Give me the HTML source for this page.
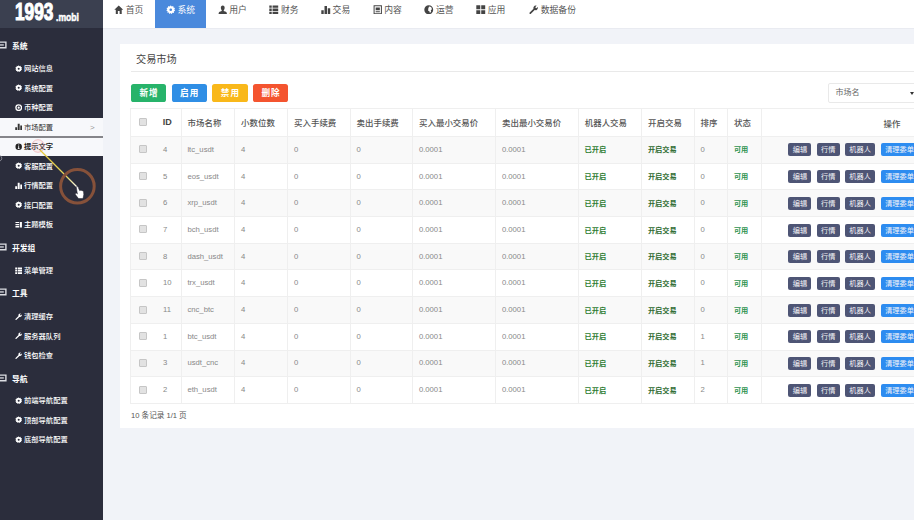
<!DOCTYPE html>
<html lang="zh-CN"><head><meta charset="utf-8"><title>交易市场</title>
<style>
*{box-sizing:border-box;margin:0;padding:0}
html,body{width:914px;height:520px;overflow:hidden}
body{background:#f1f3f8;font-family:"Liberation Sans","Noto Sans CJK SC",sans-serif;position:relative;color:#555}
.ic{width:8px;height:8px;fill:currentColor;vertical-align:middle;display:inline-block}
#side{position:absolute;left:0;top:0;width:103px;height:520px;background:#2b2d3c;overflow:hidden}
#logo{position:absolute;left:0;top:0;width:103px;height:28.3px;background:#3b4050;color:#fff}
#logo b{position:absolute;left:15px;top:0.3px;font-size:23.5px;line-height:24px;font-weight:bold;transform:scaleX(0.735);transform-origin:0 0;letter-spacing:0;-webkit-text-stroke:1.1px #fff}
#logo i{position:absolute;left:56px;top:10.5px;font-style:normal;font-size:10.5px;line-height:12px;font-weight:bold;transform:scaleX(0.82);transform-origin:0 0;-webkit-text-stroke:0.5px #fff}
.sh{position:absolute;left:0;width:103px;height:14px;line-height:15.4px;color:#fff;font-weight:bold;font-size:7.8px;padding-left:12px}
.si{position:absolute;left:0;width:103px;height:18px;line-height:19.4px;color:#fff;font-size:7.3px;padding-left:15px;white-space:nowrap;font-weight:500}
.si .ic{width:7.4px;height:7.4px;margin-right:1.6px;position:relative;top:-0.6px;left:-0.5px}
.si.on{background:#f7f8fb;color:#222}
#top{position:absolute;left:103px;top:0;width:830px;height:29px;background:#fff;border-bottom:1px solid #e9ebf1}
.tab{position:absolute;top:0;height:28px;line-height:21.8px;font-size:8.8px;color:#555;text-align:center;white-space:nowrap}
.tab .ic{width:9.5px;height:9.5px;margin-right:2px;position:relative;top:-1.1px;color:#444}
.tab.on{background:#4a89dc;color:#fff;top:-10px;height:38px;padding-top:10px}
.tab.on .ic{color:#fff}
#panel{position:absolute;left:119.5px;top:43.5px;width:820px;height:384px;background:#fff}
#title{position:absolute;left:136px;top:51.6px;font-size:10.2px;line-height:15px;color:#444}
#hr{position:absolute;left:131px;top:71.2px;width:790px;height:1px;background:#e9e9e9}
.btn{position:absolute;top:83.5px;height:18.2px;width:35.4px;border-radius:2.6px;color:#fff;font-size:8.6px;line-height:18px;text-align:center;letter-spacing:1px;padding-left:1px;font-weight:bold}
#sel{position:absolute;left:828.4px;top:83px;width:110px;height:20px;border:1px solid #e9e9e9;border-radius:2px;background:#fff;font-size:8px;line-height:17.500px;padding-left:6px;color:#666}
#sel:after{content:"";position:absolute;left:80.500px;top:7.500px;border:2px solid transparent;border-top:3px solid #333}
table{position:absolute;left:130.3px;top:108px;border-collapse:collapse;table-layout:fixed;width:892.3px;font-size:8px}
td,th{border:1px solid #efefef;padding:0 0 0 5.6px;text-align:left;white-space:nowrap;overflow:hidden;font-weight:normal}
th{height:28px;color:#555;font-size:8.45px;padding-bottom:1.5px;padding-left:5.8px;font-weight:500}
td{height:26.7px;color:#888;font-size:7.7px;padding-bottom:0.8px}
tr.odd td{background:#f9f9f9}
td.g1{color:#2e7d32;font-weight:bold;font-size:7.2px}
td.g2{color:#2e6b30;font-weight:bold;font-size:7.2px}
td.g3{color:#2d9350;font-weight:bold;font-size:7.2px}
.cb{display:inline-block;width:8px;height:8px;border:1px solid #c6c6c6;background:#e2e2e2;border-radius:1px;vertical-align:middle;margin-left:2.4px;position:relative;top:-0.5px}
td.id,th.id{border-left:none;padding-left:0}
td.c0,th.c0{border-right:none}
.ab{position:relative;top:0.5px;display:inline-block;height:13px;line-height:13px;background:#4e5575;color:#f4f4f8;font-size:7.2px;border-radius:2px;text-align:center;margin-right:5.5px;vertical-align:middle;font-weight:normal}
.ab.b{background:#2d8cf0}
td.op{padding-left:26.8px}
#foot{position:absolute;left:131px;top:408.5px;font-size:7.6px;line-height:13px;color:#555}
#ov{position:absolute;left:0;top:0;width:914px;height:520px;pointer-events:none}
#w{position:absolute;left:0;top:0;width:914px;height:520px}
.ext{position:absolute}
</style></head><body><div id="w">
<div class="ext" style="left:-10px;top:-10px;width:113px;height:540px;background:#2b2d3c"></div>
<div class="ext" style="left:-10px;top:-10px;width:113px;height:38px;background:#3b4050"></div>
<div class="ext" style="left:103px;top:-10px;width:830px;height:38px;background:#fff"></div>

<div id="side"><div id="logo"><b>1993</b><i>.mobi</i></div>
<div class="sh" style="top:39px"><svg style="position:absolute;left:0;top:2px;width:8px;height:8px" viewBox="0 0 8 8"><path d="M-2 1.100 H5.900 V6.800 H-2" fill="none" stroke="#dcdde2" stroke-width="1.400"/><path d="M0 3.950 H3.800" fill="none" stroke="#dcdde2" stroke-width="1.300"/></svg>系统</div>
<div class="si" style="top:59px"><svg class="ic" viewBox="0 0 16 16"><path fill-rule="evenodd" d="M8 0.5 L9.6 2.6 L12.2 1.8 L12.6 4.4 L15.2 5 L14 7.4 L15.5 9.6 L13.2 10.8 L13.4 13.4 L10.8 13.2 L9.6 15.5 L8 13.6 L5.6 15.2 L4.8 12.8 L2.2 13 L2.8 10.4 L0.5 9.2 L2.2 7.2 L0.8 5 L3.4 4.4 L3.8 1.8 L6.4 2.6 Z M8 5.8 A2.2 2.2 0 1 0 8 10.2 A2.2 2.2 0 1 0 8 5.8 Z"/></svg>网站信息</div>
<div class="si" style="top:78.5px"><svg class="ic" viewBox="0 0 16 16"><path fill-rule="evenodd" d="M8 0.5 L9.6 2.6 L12.2 1.8 L12.6 4.4 L15.2 5 L14 7.4 L15.5 9.6 L13.2 10.8 L13.4 13.4 L10.8 13.2 L9.6 15.5 L8 13.6 L5.6 15.2 L4.8 12.8 L2.2 13 L2.8 10.4 L0.5 9.2 L2.2 7.2 L0.8 5 L3.4 4.4 L3.8 1.8 L6.4 2.6 Z M8 5.8 A2.2 2.2 0 1 0 8 10.2 A2.2 2.2 0 1 0 8 5.8 Z"/></svg>系统配置</div>
<div class="si" style="top:98px"><svg class="ic" viewBox="0 0 16 16"><path fill-rule="evenodd" d="M8 0.5 A7.5 7.5 0 1 0 8 15.5 A7.5 7.5 0 1 0 8 0.5 Z M8 3.4 A4.6 4.6 0 1 1 8 12.600 A4.600 4.600 0 1 1 8 3.400 Z M8 5.600 A2.400 2.400 0 1 0 8 10.400 A2.400 2.400 0 1 0 8 5.600 Z"/></svg>币种配置</div>
<div class="si on" style="top:117.7px;height:18px;line-height:19.6px;font-weight:normal;color:#333"><svg class="ic" viewBox="0 0 16 16"><path d="M0.5 9 H4.6 V15 H0.5 Z M5.9 1.5 H10.1 V15 H5.9 Z M11.4 5.5 H15.5 V15 H11.4 Z"/></svg>市场配置<span style="position:absolute;left:90px;top:0;color:#999;font-weight:normal;font-size:8px">&gt;</span></div>
<div class="si on" style="top:137.3px;height:18.3px;line-height:19.2px;font-weight:bold"><svg class="ic" viewBox="0 0 16 16"><path fill-rule="evenodd" d="M8 1 A7 7 0 1 0 8 15 A7 7 0 1 0 8 1 Z M7 3.500 H9 V5.500 H7 Z M6.500 7 H9 V11.500 H10 V12.800 H6 V11.500 H7 V8.300 H6.500 Z"/></svg>提示文字</div>
<div class="si" style="top:156.6px"><svg class="ic" viewBox="0 0 16 16"><path fill-rule="evenodd" d="M8 0.5 L9.6 2.6 L12.2 1.8 L12.6 4.4 L15.2 5 L14 7.4 L15.5 9.6 L13.2 10.8 L13.4 13.4 L10.8 13.2 L9.6 15.5 L8 13.6 L5.6 15.2 L4.8 12.8 L2.2 13 L2.8 10.4 L0.5 9.2 L2.2 7.2 L0.8 5 L3.4 4.4 L3.8 1.8 L6.4 2.6 Z M8 5.8 A2.2 2.2 0 1 0 8 10.2 A2.2 2.2 0 1 0 8 5.8 Z"/></svg>客服配置</div>
<div class="si" style="top:176px"><svg class="ic" viewBox="0 0 16 16"><path d="M0.5 9 H4.6 V15 H0.5 Z M5.9 1.5 H10.1 V15 H5.9 Z M11.4 5.5 H15.5 V15 H11.4 Z"/></svg>行情配置</div>
<div class="si" style="top:195.6px"><svg class="ic" viewBox="0 0 16 16"><path fill-rule="evenodd" d="M8 0.5 L9.6 2.6 L12.2 1.8 L12.6 4.4 L15.2 5 L14 7.4 L15.5 9.6 L13.2 10.8 L13.4 13.4 L10.8 13.2 L9.6 15.5 L8 13.6 L5.6 15.2 L4.8 12.8 L2.2 13 L2.8 10.4 L0.5 9.2 L2.2 7.2 L0.8 5 L3.4 4.4 L3.8 1.8 L6.4 2.6 Z M8 5.8 A2.2 2.2 0 1 0 8 10.2 A2.2 2.2 0 1 0 8 5.8 Z"/></svg>接口配置</div>
<div class="si" style="top:215px"><svg class="ic" viewBox="0 0 16 16"><path d="M1 2 H9 V4.500 H1 Z M10.500 2 H15 V14 H10.500 Z M1 6.500 H9 V9 H1 Z M1 11 H9 V14 H1 Z"/></svg>主题模板</div>
<div class="sh" style="top:240.6px"><svg style="position:absolute;left:0;top:2px;width:8px;height:8px" viewBox="0 0 8 8"><path d="M-2 1.100 H5.900 V6.800 H-2" fill="none" stroke="#dcdde2" stroke-width="1.400"/><path d="M0 3.950 H3.800" fill="none" stroke="#dcdde2" stroke-width="1.300"/></svg>开发组</div>
<div class="si" style="top:261px"><svg class="ic" viewBox="0 0 16 16"><path d="M0.5 1 H4.6 V4.8 H0.5 Z M6 1 H15.5 V4.8 H6 Z M0.5 6.1 H4.6 V9.9 H0.5 Z M6 6.1 H15.5 V9.9 H6 Z M0.5 11.2 H4.6 V15 H0.5 Z M6 11.2 H15.5 V15 H6 Z"/></svg>菜单管理</div>
<div class="sh" style="top:286px"><svg style="position:absolute;left:0;top:2px;width:8px;height:8px" viewBox="0 0 8 8"><path d="M-2 1.100 H5.900 V6.800 H-2" fill="none" stroke="#dcdde2" stroke-width="1.400"/><path d="M0 3.950 H3.800" fill="none" stroke="#dcdde2" stroke-width="1.300"/></svg>工具</div>
<div class="si" style="top:307px"><svg class="ic" viewBox="0 0 16 16"><path d="M14.800 3.200 L12.400 5.600 L10.400 3.600 L12.800 1.200 C11 0.600 9 1.200 8 2.800 C7.200 4 7.200 5.400 7.600 6.400 L1.200 12.800 C0.600 13.400 0.600 14.200 1.200 14.800 C1.800 15.400 2.600 15.400 3.200 14.800 L9.600 8.400 C10.800 8.800 12.200 8.800 13.400 7.800 C14.800 6.800 15.400 4.800 14.800 3.200 Z"/></svg>清理缓存</div>
<div class="si" style="top:326.5px"><svg class="ic" viewBox="0 0 16 16"><path d="M14.800 3.200 L12.400 5.600 L10.400 3.600 L12.800 1.200 C11 0.600 9 1.200 8 2.800 C7.200 4 7.200 5.400 7.600 6.400 L1.200 12.800 C0.600 13.400 0.600 14.200 1.200 14.800 C1.800 15.400 2.600 15.400 3.200 14.800 L9.600 8.400 C10.800 8.800 12.200 8.800 13.400 7.800 C14.800 6.800 15.400 4.800 14.800 3.200 Z"/></svg>服务器队列</div>
<div class="si" style="top:346px"><svg class="ic" viewBox="0 0 16 16"><path d="M14.800 3.200 L12.400 5.600 L10.400 3.600 L12.800 1.200 C11 0.600 9 1.200 8 2.800 C7.200 4 7.200 5.400 7.600 6.400 L1.200 12.800 C0.600 13.400 0.600 14.200 1.200 14.800 C1.800 15.400 2.600 15.400 3.200 14.800 L9.600 8.400 C10.800 8.800 12.200 8.800 13.400 7.800 C14.800 6.800 15.400 4.800 14.800 3.200 Z"/></svg>钱包检查</div>
<div class="sh" style="top:371.7px"><svg style="position:absolute;left:0;top:2px;width:8px;height:8px" viewBox="0 0 8 8"><path d="M-2 1.100 H5.900 V6.800 H-2" fill="none" stroke="#dcdde2" stroke-width="1.400"/><path d="M0 3.950 H3.800" fill="none" stroke="#dcdde2" stroke-width="1.300"/></svg>导航</div>
<div class="si" style="top:391px"><svg class="ic" viewBox="0 0 16 16"><path fill-rule="evenodd" d="M8 0.5 L9.6 2.6 L12.2 1.8 L12.6 4.4 L15.2 5 L14 7.4 L15.5 9.6 L13.2 10.8 L13.4 13.4 L10.8 13.2 L9.6 15.5 L8 13.6 L5.6 15.2 L4.8 12.8 L2.2 13 L2.8 10.4 L0.5 9.2 L2.2 7.2 L0.8 5 L3.4 4.4 L3.8 1.8 L6.4 2.6 Z M8 5.8 A2.2 2.2 0 1 0 8 10.2 A2.2 2.2 0 1 0 8 5.8 Z"/></svg>前端导航配置</div>
<div class="si" style="top:410.5px"><svg class="ic" viewBox="0 0 16 16"><path fill-rule="evenodd" d="M8 0.5 L9.6 2.6 L12.2 1.8 L12.6 4.4 L15.2 5 L14 7.4 L15.5 9.6 L13.2 10.8 L13.4 13.4 L10.8 13.2 L9.6 15.5 L8 13.6 L5.6 15.2 L4.8 12.8 L2.2 13 L2.8 10.4 L0.5 9.2 L2.2 7.2 L0.8 5 L3.4 4.4 L3.8 1.8 L6.4 2.6 Z M8 5.8 A2.2 2.2 0 1 0 8 10.2 A2.2 2.2 0 1 0 8 5.8 Z"/></svg>顶部导航配置</div>
<div class="si" style="top:430px"><svg class="ic" viewBox="0 0 16 16"><path fill-rule="evenodd" d="M8 0.5 L9.6 2.6 L12.2 1.8 L12.6 4.4 L15.2 5 L14 7.4 L15.5 9.6 L13.2 10.8 L13.4 13.4 L10.8 13.2 L9.6 15.5 L8 13.6 L5.6 15.2 L4.8 12.8 L2.2 13 L2.8 10.4 L0.5 9.2 L2.2 7.2 L0.8 5 L3.4 4.4 L3.8 1.8 L6.4 2.6 Z M8 5.8 A2.2 2.2 0 1 0 8 10.2 A2.2 2.2 0 1 0 8 5.8 Z"/></svg>底部导航配置</div>
<div style="position:absolute;left:0;top:135.6px;width:103px;height:2.3px;background:#85858a"></div>
</div>
<div id="top">
<div class="tab" style="left:0.0px;width:51.7px"><svg class="ic" viewBox="0 0 16 16"><path d="M8 1 L0.5 8 H3 V15 H6.5 V10 H9.5 V15 H13 V8 H15.5 Z"/></svg>首页</div>
<div class="tab on" style="left:51.7px;width:51.7px"><svg class="ic" viewBox="0 0 16 16"><path fill-rule="evenodd" d="M8 0.5 L9.6 2.6 L12.2 1.8 L12.6 4.4 L15.2 5 L14 7.4 L15.5 9.6 L13.2 10.8 L13.4 13.4 L10.8 13.2 L9.6 15.5 L8 13.6 L5.6 15.2 L4.8 12.8 L2.2 13 L2.8 10.4 L0.5 9.2 L2.2 7.2 L0.8 5 L3.4 4.4 L3.8 1.8 L6.4 2.6 Z M8 5.8 A2.2 2.2 0 1 0 8 10.2 A2.2 2.2 0 1 0 8 5.8 Z"/></svg>系统</div>
<div class="tab" style="left:103.4px;width:51.7px"><svg class="ic" viewBox="0 0 16 16"><path d="M8 1 C10.2 1 11.2 2.6 11.2 4.8 C11.2 7 10 8.6 9.6 9 C9.6 10 10 10.4 12 11 C14 11.6 15 12.4 15 15 H1 C1 12.4 2 11.6 4 11 C6 10.4 6.4 10 6.4 9 C6 8.6 4.800 7 4.800 4.800 C4.800 2.600 5.800 1 8 1 Z"/></svg>用户</div>
<div class="tab" style="left:155.1px;width:51.7px"><svg class="ic" viewBox="0 0 16 16"><path d="M0.5 1 H4.6 V4.8 H0.5 Z M6 1 H15.5 V4.8 H6 Z M0.5 6.1 H4.6 V9.9 H0.5 Z M6 6.1 H15.5 V9.9 H6 Z M0.5 11.2 H4.6 V15 H0.5 Z M6 11.2 H15.5 V15 H6 Z"/></svg>财务</div>
<div class="tab" style="left:206.8px;width:51.7px"><svg class="ic" viewBox="0 0 16 16"><path d="M0.5 9 H4.6 V15 H0.5 Z M5.9 1.5 H10.1 V15 H5.9 Z M11.4 5.5 H15.5 V15 H11.4 Z"/></svg>交易</div>
<div class="tab" style="left:258.5px;width:51.7px"><svg class="ic" viewBox="0 0 16 16"><path fill-rule="evenodd" d="M1 0.5 H15 V15.5 H1 Z M2.7 2.2 V13.8 H13.3 V2.2 Z M4.5 4 H11.5 V9 H4.5 Z M4.5 10.5 H11.5 V12 H4.5 Z"/></svg>内容</div>
<div class="tab" style="left:310.2px;width:51.7px"><svg class="ic" viewBox="0 0 16 16"><path fill-rule="evenodd" d="M8 0.5 A7.5 7.5 0 1 0 8 15.5 A7.5 7.5 0 1 0 8 0.5 Z M8.5 2.5 L12 3.500 L13.500 7 L11.500 8.500 L12 11.500 L10 13.500 L9 10.500 L7 9.500 L7.200 6 Z"/></svg>运营</div>
<div class="tab" style="left:361.9px;width:51.7px"><svg class="ic" viewBox="0 0 16 16"><path d="M0.5 0.3 H7.2 V7.2 H0.5 Z M8.8 0.3 H15.5 V7.2 H8.8 Z M0.5 8.8 H7.2 V15.700 H0.5 Z M8.8 8.8 H15.5 V15.700 H8.8 Z"/></svg>应用</div>
<div class="tab" style="left:413.6px;width:72px"><svg class="ic" viewBox="0 0 16 16"><path d="M14.800 3.200 L12.400 5.600 L10.400 3.600 L12.800 1.200 C11 0.600 9 1.200 8 2.800 C7.200 4 7.200 5.400 7.600 6.400 L1.200 12.800 C0.600 13.400 0.600 14.200 1.200 14.800 C1.800 15.400 2.600 15.400 3.200 14.800 L9.600 8.400 C10.800 8.800 12.200 8.800 13.400 7.800 C14.800 6.800 15.400 4.800 14.800 3.200 Z"/></svg>数据备份</div>
</div>
<div id="panel"></div><div id="title">交易市场</div><div id="hr"></div>
<div class="btn" style="left:130.8px;background:#27b36a">新增</div>
<div class="btn" style="left:171.5px;background:#2f8ee5">启用</div>
<div class="btn" style="left:212.2px;background:#f9b81a">禁用</div>
<div class="btn" style="left:252.9px;background:#f4542f">删除</div>
<div id="sel">市场名</div>
<table><colgroup>
<col style="width:25px"><col style="width:25.5px">
<col style="width:53.5px">
<col style="width:53px">
<col style="width:62.5px">
<col style="width:62.5px">
<col style="width:83px">
<col style="width:82.7px">
<col style="width:63.3px">
<col style="width:52.5px">
<col style="width:33.5px">
<col style="width:33.4px">
<col style="width:261.6px">
</colgroup>
<tr><th class="c0"><span class="cb"></span></th><th class="id" style="padding-left:7px;font-size:9px;color:#444;font-weight:bold">ID</th>
<th>市场名称</th>
<th>小数位数</th>
<th>买入手续费</th>
<th>卖出手续费</th>
<th>买入最小交易价</th>
<th>卖出最小交易价</th>
<th>机器人交易</th>
<th>开启交易</th>
<th>排序</th>
<th>状态</th>
<th style="text-align:center;padding:0">操作</th></tr>
<tr class="odd"><td class="c0"><span class="cb"></span></td><td class="id" style="padding-left:7.2px">4</td><td>ltc_usdt</td><td>4</td><td>0</td><td>0</td><td>0.0001</td><td>0.0001</td><td class="g1">已开启</td><td class="g2">开启交易</td><td>0</td><td class="g3">可用</td><td class="op"><span class="ab" style="width:22.9px">编辑</span><span class="ab" style="width:22.8px">行情</span><span class="ab" style="width:30px">机器人</span><span class="ab b" style="width:60px;text-align:left;padding-left:4.5px">清理委单缓存</span></td></tr>
<tr><td class="c0"><span class="cb"></span></td><td class="id" style="padding-left:7.2px">5</td><td>eos_usdt</td><td>4</td><td>0</td><td>0</td><td>0.0001</td><td>0.0001</td><td class="g1">已开启</td><td class="g2">开启交易</td><td>0</td><td class="g3">可用</td><td class="op"><span class="ab" style="width:22.9px">编辑</span><span class="ab" style="width:22.8px">行情</span><span class="ab" style="width:30px">机器人</span><span class="ab b" style="width:60px;text-align:left;padding-left:4.5px">清理委单缓存</span></td></tr>
<tr class="odd"><td class="c0"><span class="cb"></span></td><td class="id" style="padding-left:7.2px">6</td><td>xrp_usdt</td><td>4</td><td>0</td><td>0</td><td>0.0001</td><td>0.0001</td><td class="g1">已开启</td><td class="g2">开启交易</td><td>0</td><td class="g3">可用</td><td class="op"><span class="ab" style="width:22.9px">编辑</span><span class="ab" style="width:22.8px">行情</span><span class="ab" style="width:30px">机器人</span><span class="ab b" style="width:60px;text-align:left;padding-left:4.5px">清理委单缓存</span></td></tr>
<tr><td class="c0"><span class="cb"></span></td><td class="id" style="padding-left:7.2px">7</td><td>bch_usdt</td><td>4</td><td>0</td><td>0</td><td>0.0001</td><td>0.0001</td><td class="g1">已开启</td><td class="g2">开启交易</td><td>0</td><td class="g3">可用</td><td class="op"><span class="ab" style="width:22.9px">编辑</span><span class="ab" style="width:22.8px">行情</span><span class="ab" style="width:30px">机器人</span><span class="ab b" style="width:60px;text-align:left;padding-left:4.5px">清理委单缓存</span></td></tr>
<tr class="odd"><td class="c0"><span class="cb"></span></td><td class="id" style="padding-left:7.2px">8</td><td>dash_usdt</td><td>4</td><td>0</td><td>0</td><td>0.0001</td><td>0.0001</td><td class="g1">已开启</td><td class="g2">开启交易</td><td>0</td><td class="g3">可用</td><td class="op"><span class="ab" style="width:22.9px">编辑</span><span class="ab" style="width:22.8px">行情</span><span class="ab" style="width:30px">机器人</span><span class="ab b" style="width:60px;text-align:left;padding-left:4.5px">清理委单缓存</span></td></tr>
<tr><td class="c0"><span class="cb"></span></td><td class="id" style="padding-left:7.2px">10</td><td>trx_usdt</td><td>4</td><td>0</td><td>0</td><td>0.0001</td><td>0.0001</td><td class="g1">已开启</td><td class="g2">开启交易</td><td>0</td><td class="g3">可用</td><td class="op"><span class="ab" style="width:22.9px">编辑</span><span class="ab" style="width:22.8px">行情</span><span class="ab" style="width:30px">机器人</span><span class="ab b" style="width:60px;text-align:left;padding-left:4.5px">清理委单缓存</span></td></tr>
<tr class="odd"><td class="c0"><span class="cb"></span></td><td class="id" style="padding-left:7.2px">11</td><td>cnc_btc</td><td>4</td><td>0</td><td>0</td><td>0.0001</td><td>0.0001</td><td class="g1">已开启</td><td class="g2">开启交易</td><td>0</td><td class="g3">可用</td><td class="op"><span class="ab" style="width:22.9px">编辑</span><span class="ab" style="width:22.8px">行情</span><span class="ab" style="width:30px">机器人</span><span class="ab b" style="width:60px;text-align:left;padding-left:4.5px">清理委单缓存</span></td></tr>
<tr><td class="c0"><span class="cb"></span></td><td class="id" style="padding-left:7.2px">1</td><td>btc_usdt</td><td>4</td><td>0</td><td>0</td><td>0.0001</td><td>0.0001</td><td class="g1">已开启</td><td class="g2">开启交易</td><td>1</td><td class="g3">可用</td><td class="op"><span class="ab" style="width:22.9px">编辑</span><span class="ab" style="width:22.8px">行情</span><span class="ab" style="width:30px">机器人</span><span class="ab b" style="width:60px;text-align:left;padding-left:4.5px">清理委单缓存</span></td></tr>
<tr class="odd"><td class="c0"><span class="cb"></span></td><td class="id" style="padding-left:7.2px">3</td><td>usdt_cnc</td><td>4</td><td>0</td><td>0</td><td>0.0001</td><td>0.0001</td><td class="g1">已开启</td><td class="g2">开启交易</td><td>1</td><td class="g3">可用</td><td class="op"><span class="ab" style="width:22.9px">编辑</span><span class="ab" style="width:22.8px">行情</span><span class="ab" style="width:30px">机器人</span><span class="ab b" style="width:60px;text-align:left;padding-left:4.5px">清理委单缓存</span></td></tr>
<tr><td class="c0"><span class="cb"></span></td><td class="id" style="padding-left:7.2px">2</td><td>eth_usdt</td><td>4</td><td>0</td><td>0</td><td>0.0001</td><td>0.0001</td><td class="g1">已开启</td><td class="g2">开启交易</td><td>2</td><td class="g3">可用</td><td class="op"><span class="ab" style="width:22.9px">编辑</span><span class="ab" style="width:22.8px">行情</span><span class="ab" style="width:30px">机器人</span><span class="ab b" style="width:60px;text-align:left;padding-left:4.5px">清理委单缓存</span></td></tr>
</table>
<div id="foot">10 条记录 1/1 页</div>
<svg id="ov" viewBox="0 0 914 520">
<circle cx="38" cy="146" r="6.3" fill="rgba(255,205,205,0.22)" stroke="rgba(235,140,140,0.7)" stroke-width="0.7"/>
<defs><linearGradient id="lg" x1="40" y1="150" x2="78" y2="188" gradientUnits="userSpaceOnUse"><stop offset="0" stop-color="#e6c838"/><stop offset="0.7" stop-color="#e8d860"/><stop offset="1" stop-color="#fff"/></linearGradient></defs>
<line x1="40" y1="150" x2="78" y2="188" stroke="url(#lg)" stroke-width="1.3"/>
<circle cx="77.400" cy="186.300" r="16.800" fill="none" stroke="#86513a" stroke-width="3"/>
<path d="M76.200 186.800 L77.800 186.400 L79.600 190.600 L81 190.200 L82.300 190.700 L83.500 191.300 L83.800 194.500 L83 198.600 L78.500 198.600 L75 194 L76.300 193 L77.400 194 Z" fill="#fff" stroke="#1c1d28" stroke-width="0.5"/>
<path d="M0 155.500 A3 3 0 0 1 0 161" fill="none" stroke="#9a9aa4" stroke-width="0.8"/>
</svg>
</div></body></html>
